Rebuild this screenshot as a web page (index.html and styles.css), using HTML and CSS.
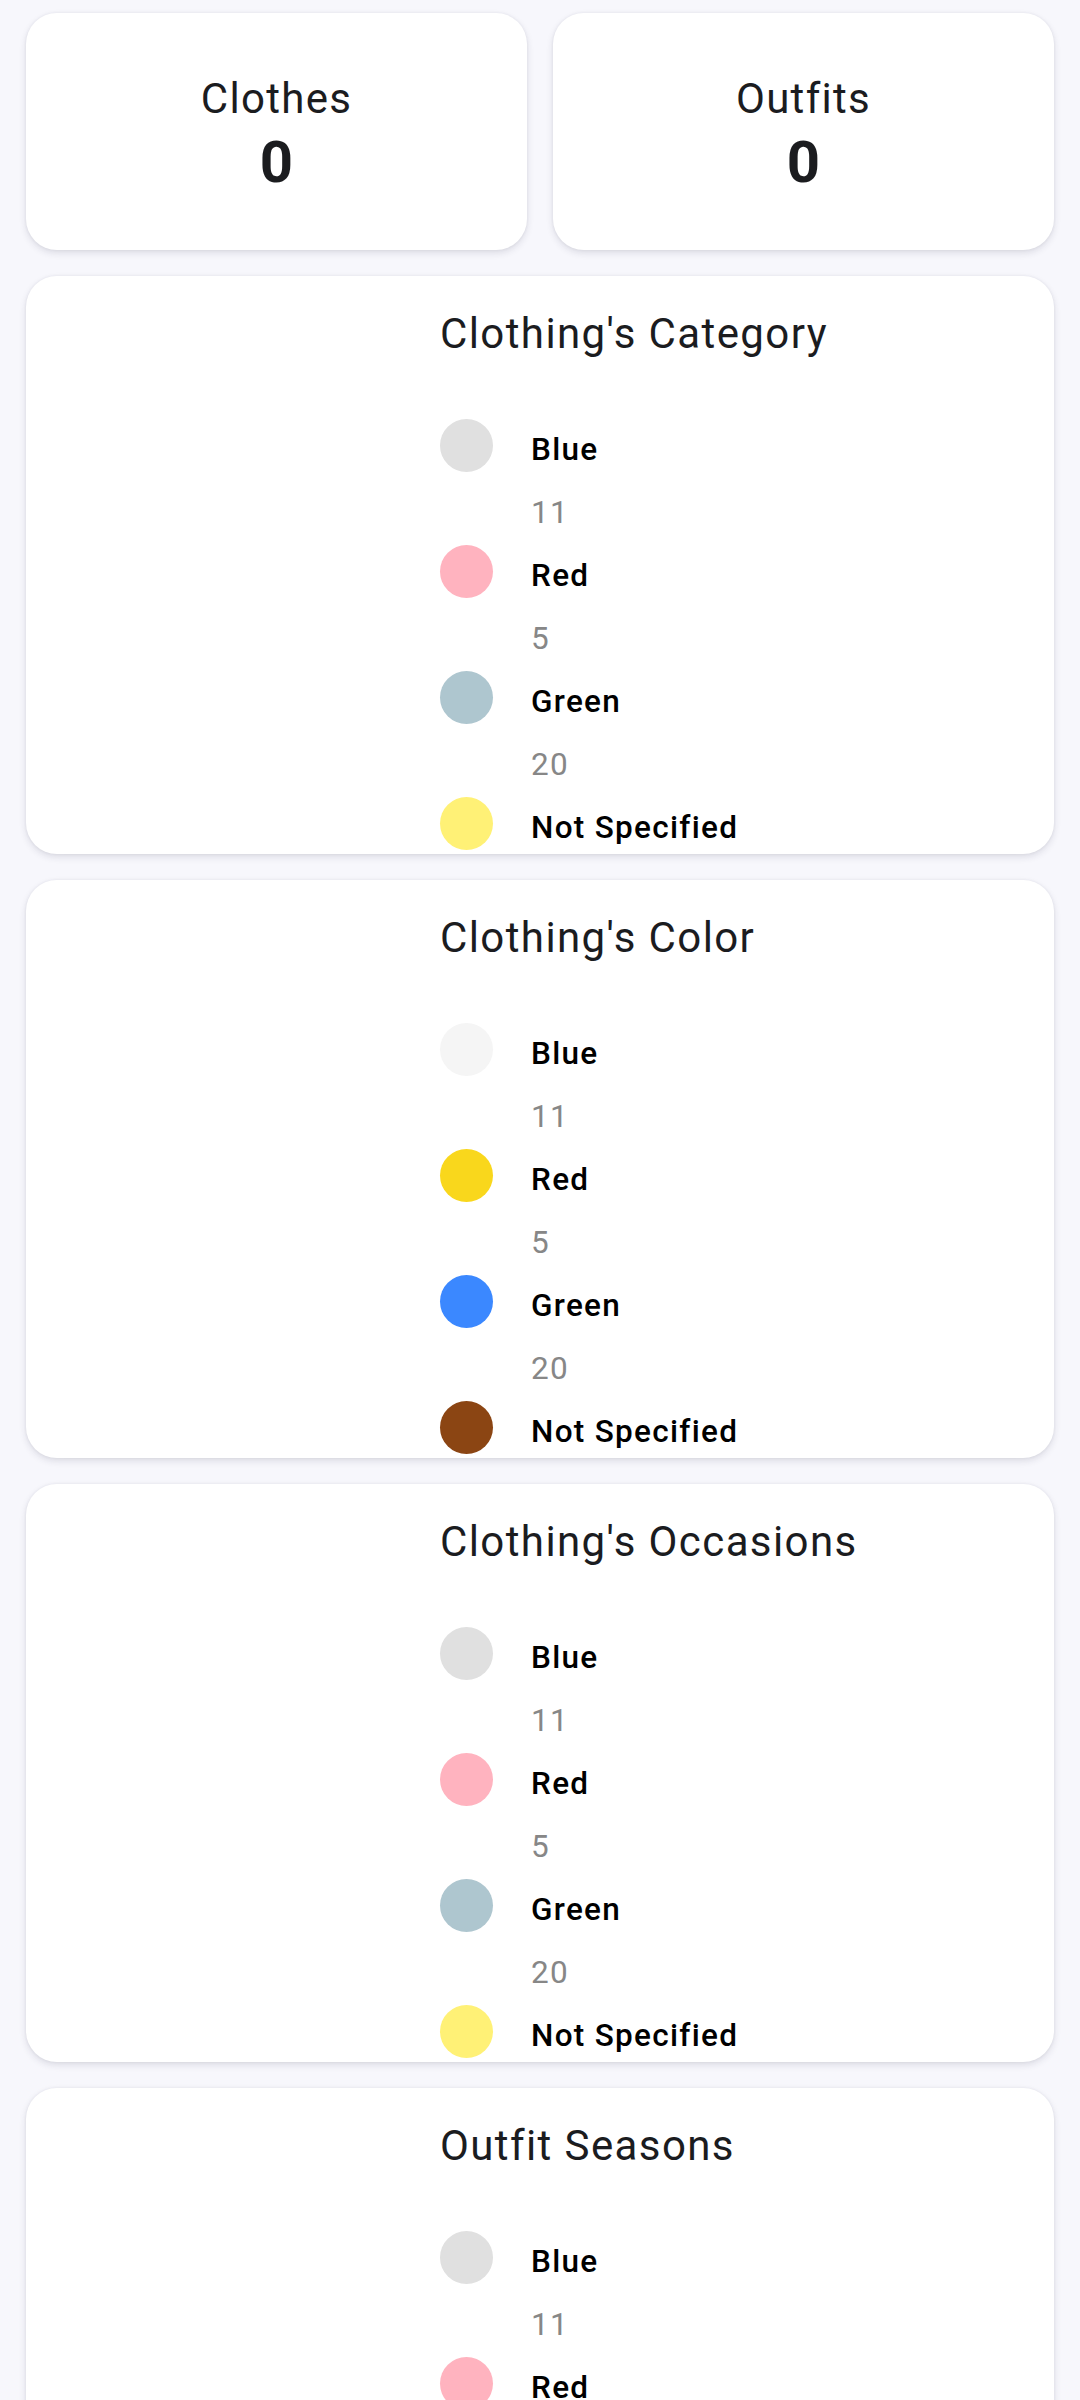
FILE: index.html
```html
<!DOCTYPE html>
<html lang="en">
<head>
<meta charset="utf-8">
<title>Stats</title>
<link rel="stylesheet" href="styles.css">
</head>
<body>
<main class="page">
  <section class="totals">
    <div class="card total">
      <div class="total-label">Clothes</div>
      <div class="total-value">0</div>
    </div>
    <div class="card total">
      <div class="total-label">Outfits</div>
      <div class="total-value">0</div>
    </div>
  </section>

  <section class="card chart-card">
    <div class="chart"></div>
    <div class="legend">
      <h2 class="chart-title">Clothing's Category</h2>
      <ul class="legend-list">
        <li class="item"><span class="dot c-grey"></span><span class="label">Blue</span><span class="count">11</span></li>
        <li class="item"><span class="dot c-pink"></span><span class="label">Red</span><span class="count">5</span></li>
        <li class="item"><span class="dot c-slate"></span><span class="label">Green</span><span class="count">20</span></li>
        <li class="item"><span class="dot c-lemon"></span><span class="label">Not Specified</span></li>
      </ul>
    </div>
  </section>

  <section class="card chart-card">
    <div class="chart"></div>
    <div class="legend">
      <h2 class="chart-title">Clothing's Color</h2>
      <ul class="legend-list">
        <li class="item"><span class="dot c-white"></span><span class="label">Blue</span><span class="count">11</span></li>
        <li class="item"><span class="dot c-yellow"></span><span class="label">Red</span><span class="count">5</span></li>
        <li class="item"><span class="dot c-blue"></span><span class="label">Green</span><span class="count">20</span></li>
        <li class="item"><span class="dot c-brown"></span><span class="label">Not Specified</span></li>
      </ul>
    </div>
  </section>

  <section class="card chart-card">
    <div class="chart"></div>
    <div class="legend">
      <h2 class="chart-title">Clothing's Occasions</h2>
      <ul class="legend-list">
        <li class="item"><span class="dot c-grey"></span><span class="label">Blue</span><span class="count">11</span></li>
        <li class="item"><span class="dot c-pink"></span><span class="label">Red</span><span class="count">5</span></li>
        <li class="item"><span class="dot c-slate"></span><span class="label">Green</span><span class="count">20</span></li>
        <li class="item"><span class="dot c-lemon"></span><span class="label">Not Specified</span></li>
      </ul>
    </div>
  </section>

  <section class="card chart-card">
    <div class="chart"></div>
    <div class="legend">
      <h2 class="chart-title">Outfit Seasons</h2>
      <ul class="legend-list">
        <li class="item"><span class="dot c-grey"></span><span class="label">Blue</span><span class="count">11</span></li>
        <li class="item"><span class="dot c-pink"></span><span class="label">Red</span></li>
      </ul>
    </div>
  </section>
</main>
</body>
</html>
```

FILE: styles.css
```css
html, body {
  margin: 0;
  padding: 0;
  background: #f7f7fc;
}

body {
  font-family: Roboto, "Noto Sans", "Liberation Sans", sans-serif;
  color: #1b1c1f;
  width: 1080px;
  height: 2400px;
  overflow: hidden;
}

.page {
  display: flex;
  flex-direction: column;
  gap: 26px;
  padding: 13px 26px 0;
}

.card {
  background: #ffffff;
  border-radius: 31px;
  box-shadow: 0 3px 7px rgba(40, 40, 70, 0.13), 0 0 3px rgba(40, 40, 70, 0.07);
}

.totals {
  display: grid;
  grid-template-columns: 1fr 1fr;
  column-gap: 26px;
}

.total {
  height: 237px;
  display: flex;
  flex-direction: column;
  align-items: center;
  justify-content: center;
}

.total-label {
  font-size: 42px;
  line-height: 61px;
  letter-spacing: 1.3px;
  font-weight: 400;
}

.total-value {
  font-size: 58px;
  line-height: 67px;
  font-weight: 700;
}

.chart-card {
  height: 578px;
  overflow: hidden;
  display: flex;
  box-sizing: border-box;
  padding-top: 26px;
}

.chart {
  width: 414px;
  flex: none;
}

.legend {
  flex: 1;
}

.chart-title {
  margin: 0;
  font-size: 42px;
  line-height: 63px;
  font-weight: 400;
  letter-spacing: 1.4px;
  color: #1b1c1f;
}

.legend-list {
  list-style: none;
  margin: 54px 0 0;
  padding: 0;
}

.item {
  display: grid;
  grid-template-columns: 53px auto;
  grid-template-rows: 53px auto;
  column-gap: 38px;
  height: 126px;
}

.dot {
  grid-column: 1;
  grid-row: 1;
  width: 53px;
  height: 53px;
  border-radius: 50%;
}

.label {
  grid-column: 2;
  grid-row: 1;
  margin-top: 10px;
  font-size: 31.5px;
  line-height: 42px;
  font-weight: 500;
  letter-spacing: 1.3px;
  color: #000000;
}

.count {
  grid-column: 2;
  grid-row: 2;
  margin-top: 20px;
  font-size: 31.5px;
  line-height: 42px;
  font-weight: 400;
  letter-spacing: 1.3px;
  color: #878787;
}

.c-grey { background: #e0e0e0; }
.c-pink { background: #ffb3bf; }
.c-slate { background: #aec6cf; }
.c-lemon { background: #fff176; }
.c-white { background: #f5f5f5; }
.c-yellow { background: #f9d71c; }
.c-blue { background: #3b88ff; }
.c-brown { background: #8b4513; }
```
